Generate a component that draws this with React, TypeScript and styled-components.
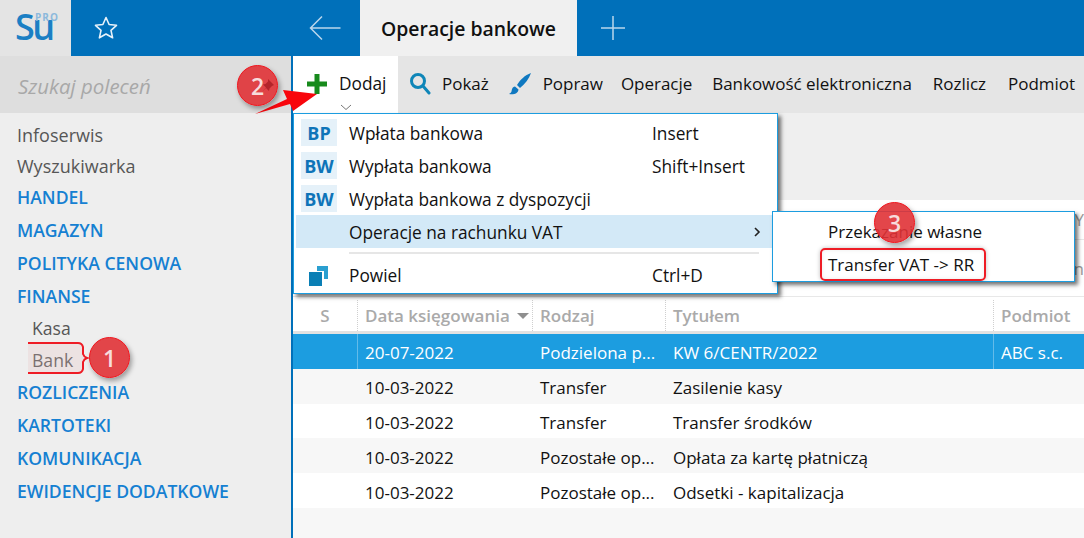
import React from "react";
import styled, { createGlobalStyle } from "styled-components";

const Global = createGlobalStyle`
  html, body { margin: 0; padding: 0; }
  body { width: 1084px; height: 538px; overflow: hidden; font-family: "Open Sans", "Noto Sans", sans-serif; }
`;

const Page = styled.div`
  position: relative;
  width: 1084px;
  height: 538px;
  overflow: hidden;
  background: #fff;
  display: flex;
  flex-direction: column;
`;

const TopBar = styled.div`
  height: 56px;
  display: flex;
  background: #0070ba;
  flex: none;
`;

const LogoBox = styled.div`
  width: 71px;
  background: #e4e4e4;
  position: relative;
`;

const LogoText = styled.span`
  position: absolute;
  left: 15px;
  top: 3px;
  font-size: 36px;
  line-height: 48px;
  font-weight: 600;
  letter-spacing: -2.5px;
  color: #1b7fc4;
`;

const LogoPro = styled.span`
  position: absolute;
  left: 35px;
  top: 11px;
  font-size: 10px;
  line-height: 12px;
  font-weight: 700;
  letter-spacing: 1px;
  color: #8cb9dc;
`;

const StarSlot = styled.div`
  width: 70px;
  display: flex;
  align-items: center;
  justify-content: center;
`;

const BackSlot = styled.div`
  margin-left: 149px;
  width: 70px;
  display: flex;
  align-items: center;
  justify-content: center;
`;

const Tab = styled.div`
  width: 217px;
  background: #f0f0f0;
  color: #111;
  font-size: 19.4px;
  font-weight: 600;
  display: flex;
  align-items: center;
  justify-content: center;
`;

const PlusSlot = styled.div`
  width: 72px;
  display: flex;
  align-items: center;
  justify-content: center;
`;

const Body = styled.div`
  flex: 1;
  display: flex;
  min-height: 0;
`;

const Sidebar = styled.aside`
  width: 291px;
  flex: none;
  background: #eeeeee;
  border-right: 2px solid #0070ba;
`;

const SearchBox = styled.div`
  height: 57px;
  background: #dedede;
  padding-left: 18px;
  padding-top: 2px;
  box-sizing: border-box;
  display: flex;
  align-items: center;
  font-style: italic;
  font-size: 20.4px;
  color: #a8a8a8;
`;

const NavList = styled.nav`
  padding-top: 7px;
  display: flex;
  flex-direction: column;
`;

const navHeight = { plain: 30.5, head: 33, sub: 31.5 };
const navSize = { plain: 18, head: 17.6, sub: 17.6 };

const NavItem = styled.div<{ $kind: "plain" | "head" | "sub" }>`
  height: ${(p) => navHeight[p.$kind]}px;
  line-height: ${(p) => navHeight[p.$kind]}px;
  padding-left: ${(p) => (p.$kind === "sub" ? 32 : 17)}px;
  font-size: ${(p) => navSize[p.$kind]}px;
  font-weight: ${(p) => (p.$kind === "head" ? 600 : 400)};
  color: ${(p) => (p.$kind === "head" ? "#1580d2" : "#565656")};
  white-space: nowrap;
`;

const Main = styled.main`
  flex: 1;
  min-width: 0;
  display: flex;
  flex-direction: column;
`;

const Toolbar = styled.div`
  height: 57px;
  padding-bottom: 2px;
  box-sizing: border-box;
  background: #e5e5e5;
  display: flex;
  align-items: center;
  flex: none;
`;

const AddButton = styled.div`
  position: relative;
  width: 105px;
  height: 57px;
  margin-bottom: -2px;
  padding-bottom: 2px;
  background: #fff;
  display: flex;
  align-items: center;
  padding-left: 14px;
  box-sizing: border-box;
  gap: 12px;
  font-size: 17.3px;
  color: #111;
`;

const Caret = styled.svg`
  position: absolute;
  left: 47px;
  bottom: 2px;
`;

const ToolItem = styled.div<{ $ml: number }>`
  margin-left: ${(p) => p.$ml}px;
  display: flex;
  align-items: center;
  gap: 11px;
  font-size: 17px;
  letter-spacing: -0.03px;
  color: #111;
  white-space: nowrap;
`;

const Filters = styled.div`
  height: 184px;
  flex: none;
  background: #fff;
  display: flex;
  flex-direction: column;
`;

const FilterTop = styled.div`
  height: 87px;
  flex: none;
  background: #efefef;
`;

const FilterRow = styled.div<{ $h: number }>`
  height: ${(p) => p.$h}px;
  flex: none;
  box-sizing: border-box;
  border-bottom: 1px solid #e8e8e8;
  display: flex;
  align-items: center;
  justify-content: flex-end;
  font-size: 17px;
  color: #9a9a9a;
`;

const Table = styled.div`
  flex: 1;
  background: #f7f7f7;
`;

const grid = "65px 175px 133px 328px 1fr";

const HeadRow = styled.div`
  display: grid;
  grid-template-columns: ${grid};
  height: 37px;
  padding-top: 3px;
  background: #fff;
  border-bottom: 3px solid #e2e2e2;
  box-sizing: border-box;
`;

const HeadCell = styled.div<{ $center?: boolean }>`
  display: flex;
  align-items: center;
  gap: 7px;
  justify-content: ${(p) => (p.$center ? "center" : "flex-start")};
  padding-left: ${(p) => (p.$center ? 0 : 7)}px;
  font-size: 17px;
  font-weight: 600;
  color: #aaaaaa;
  border-right: 1px dotted #cfcfcf;
  white-space: nowrap;
  &:last-child { border-right: 0; }
`;

const SortArrow = styled.span`
  width: 0;
  height: 0;
  border-left: 6px solid transparent;
  border-right: 6px solid transparent;
  border-top: 6px solid #8f8f8f;
`;

const Row = styled.div<{ $selected?: boolean; $alt?: boolean }>`
  display: grid;
  grid-template-columns: ${grid};
  height: 34.8px;
  background: ${(p) => (p.$selected ? "#1c9de0" : p.$alt ? "#f7f7f7" : "#fff")};
  color: ${(p) => (p.$selected ? "#fff" : "#111")};
  font-size: 17px;
`;

const Cell = styled.div<{ $divider?: boolean }>`
  display: flex;
  align-items: center;
  padding: 3px 0 0 7px;
  box-sizing: border-box;
  white-space: nowrap;
  overflow: hidden;
  border-right: 1px solid ${(p) => (p.$divider ? "#63bbe9" : "transparent")};
  &:last-child { border-right: 0; }
`;

const Menu = styled.div`
  position: absolute;
  left: 293px;
  top: 113px;
  width: 485px;
  height: 181px;
  box-sizing: border-box;
  background: #fff;
  border: 1px solid #1c9de0;
  padding: 2px 2px 0;
  box-shadow: 3px 3px 4px rgba(0, 0, 0, 0.55);
`;

const MenuRow = styled.div<{ $hover?: boolean }>`
  position: relative;
  height: 33px;
  padding-top: 2px;
  box-sizing: border-box;
  display: grid;
  grid-template-columns: 53px 303px 1fr;
  align-items: center;
  font-size: 17.3px;
  color: #111;
  background: ${(p) => (p.$hover ? "#d3e9f7" : "transparent")};
  white-space: nowrap;
`;

const Badge = styled.span`
  justify-self: start;
  margin: -2px 0 0 5px;
  width: 36px;
  height: 27px;
  background: #e5f1f9;
  color: #0e74b8;
  font-size: 18px;
  font-weight: 700;
  display: flex;
  align-items: center;
  justify-content: center;
`;

const Separator = styled.div`
  height: 2px;
  margin: 4px 16px 4px 53px;
  background: #e6e6e6;
`;

const Chevron = styled.svg`
  position: absolute;
  right: 14px;
  top: 12px;
`;

const CopyIcon = styled.svg`
  margin-left: 13px;
`;

const Submenu = styled.div`
  position: absolute;
  left: 772px;
  top: 211px;
  width: 303px;
  height: 71px;
  box-sizing: border-box;
  padding-top: 3px;
  background: #fff;
  border: 1px solid #1c9de0;
  box-shadow: 3px 3px 4px rgba(0, 0, 0, 0.55);
`;

const SubmenuRow = styled.div`
  height: 33px;
  padding-left: 55px;
  display: flex;
  align-items: center;
  font-size: 17px;
  color: #111;
`;

const Callout = styled.div`
  position: absolute;
  left: 820px;
  top: 248px;
  width: 166px;
  height: 33px;
  box-sizing: border-box;
  border: 2px solid #ee1c25;
  border-radius: 5px;
  box-shadow: 0 0 4px rgba(0, 0, 0, 0.25), inset 0 0 4px rgba(0, 0, 0, 0.08);
`;

const Marker = styled.div<{ $x: number; $y: number }>`
  position: absolute;
  left: ${(p) => p.$x}px;
  top: ${(p) => p.$y}px;
  width: 41px;
  height: 41px;
  box-sizing: border-box;
  border-radius: 50%;
  background: rgba(224, 50, 54, 0.9);
  border: 1.5px solid #f0161e;
  box-shadow: 2px 3px 5px rgba(0, 0, 0, 0.35);
  color: #f7dcdc;
  font-size: 23px;
  font-weight: 600;
  display: flex;
  align-items: center;
  justify-content: center;
`;

const Overlay = styled.svg<{ $x: number; $y: number }>`
  position: absolute;
  left: ${(p) => p.$x}px;
  top: ${(p) => p.$y}px;
  pointer-events: none;
  overflow: visible;
`;

const rows = [
  ["20-07-2022", "Podzielona p...", "KW 6/CENTR/2022", "ABC s.c."],
  ["10-03-2022", "Transfer", "Zasilenie kasy", ""],
  ["10-03-2022", "Transfer", "Transfer środków", ""],
  ["10-03-2022", "Pozostałe op...", "Opłata za kartę płatniczą", ""],
  ["10-03-2022", "Pozostałe op...", "Odsetki - kapitalizacja", ""],
];

export default function App() {
  return (
    <Page>
      <Global />
      <TopBar>
        <LogoBox>
          <LogoText>Su</LogoText>
          <LogoPro>PRO</LogoPro>
        </LogoBox>
        <StarSlot>
          <svg width="28" height="28" viewBox="0 0 28 28" fill="none" stroke="#e8f2fa" strokeWidth="1.6" strokeLinejoin="round">
            <path d="M14 3.500l3.100 7 7.400.8-5.500 5 1.600 7.500L14 20l-6.600 3.800L9 16.300l-5.500-5 7.400-.8z" />
          </svg>
        </StarSlot>
        <BackSlot>
          <svg width="32" height="26" viewBox="0 0 32 26" fill="none" stroke="#b9d6ec" strokeWidth="1.5">
            <path d="M31.500 13H1.500M13 1.500L1.500 13 13 24.500" />
          </svg>
        </BackSlot>
        <Tab>Operacje bankowe</Tab>
        <PlusSlot>
          <svg width="26" height="26" viewBox="0 0 26 26" stroke="#b9d6ec" strokeWidth="1.5">
            <path d="M13 1v24M1 13h24" />
          </svg>
        </PlusSlot>
      </TopBar>
      <Body>
        <Sidebar>
          <SearchBox>Szukaj poleceń</SearchBox>
          <NavList>
            <NavItem $kind="plain">Infoserwis</NavItem>
            <NavItem $kind="plain">Wyszukiwarka</NavItem>
            <NavItem $kind="head">HANDEL</NavItem>
            <NavItem $kind="head">MAGAZYN</NavItem>
            <NavItem $kind="head">POLITYKA CENOWA</NavItem>
            <NavItem $kind="head">FINANSE</NavItem>
            <NavItem $kind="sub">Kasa</NavItem>
            <NavItem $kind="sub">Bank</NavItem>
            <NavItem $kind="head">ROZLICZENIA</NavItem>
            <NavItem $kind="head">KARTOTEKI</NavItem>
            <NavItem $kind="head">KOMUNIKACJA</NavItem>
            <NavItem $kind="head">EWIDENCJE DODATKOWE</NavItem>
          </NavList>
        </Sidebar>
        <Main>
          <Toolbar>
            <AddButton>
              <svg width="20" height="20" viewBox="0 0 20 20" fill="#178a1c">
                <path d="M7.500 0h5v7.500H20v5h-7.500V20h-5v-7.500H0v-5h7.500z" />
              </svg>
              Dodaj
              <Caret width="12" height="7" viewBox="0 0 12 7" fill="none" stroke="#777" strokeWidth="1">
                <path d="M1 1l5 4.500L11 1" />
              </Caret>
            </AddButton>
            <ToolItem $ml={11}>
              <svg width="22" height="23" viewBox="0 0 22 23" fill="none" stroke="#0f86b8" strokeWidth="3">
                <circle cx="9" cy="9" r="6.500" />
                <path d="M14 14l6 7" strokeLinecap="round" />
              </svg>
              Pokaż
            </ToolItem>
            <ToolItem $ml={19}>
              <svg width="24" height="24" viewBox="0 0 24 24" fill="#0f78c0">
                <path d="M23 1c-6 2-11 7-14 12l3 3C17 12 21 7 23 1zM7 14.500c-3 .5-3 3-3.500 5-.3 1.200-1.500 2-2.500 2.500 4 1 9 0 9.500-4.500z" />
              </svg>
              Popraw
            </ToolItem>
            <ToolItem $ml={18}>Operacje</ToolItem>
            <ToolItem $ml={20}>Bankowość elektroniczna</ToolItem>
            <ToolItem $ml={21}>Rozlicz</ToolItem>
            <ToolItem $ml={22}>Podmiot</ToolItem>
          </Toolbar>
          <Filters>
            <FilterTop />
            <FilterRow $h={40}>Y</FilterRow>
            <FilterRow $h={57}>n</FilterRow>
          </Filters>
          <Table>
            <HeadRow>
              <HeadCell $center>S</HeadCell>
              <HeadCell>
                Data księgowania
                <SortArrow />
              </HeadCell>
              <HeadCell>Rodzaj</HeadCell>
              <HeadCell>Tytułem</HeadCell>
              <HeadCell>Podmiot</HeadCell>
            </HeadRow>
            {rows.map((r, i) => (
              <Row key={i} $selected={i === 0} $alt={i % 2 === 1}>
                <Cell $divider={i === 0} />
                {r.map((c, j) => (
                  <Cell key={j} $divider={i === 0 && j === 2}>
                    {c}
                  </Cell>
                ))}
              </Row>
            ))}
          </Table>
        </Main>
      </Body>

      <Menu>
        <MenuRow>
          <Badge>BP</Badge>
          <span>Wpłata bankowa</span>
          <span>Insert</span>
        </MenuRow>
        <MenuRow>
          <Badge>BW</Badge>
          <span>Wypłata bankowa</span>
          <span>Shift+Insert</span>
        </MenuRow>
        <MenuRow>
          <Badge>BW</Badge>
          <span>Wypłata bankowa z dyspozycji</span>
        </MenuRow>
        <MenuRow $hover>
          <span />
          <span>Operacje na rachunku VAT</span>
          <Chevron width="8" height="10" viewBox="0 0 8 10" fill="none" stroke="#222" strokeWidth="1.6">
            <path d="M2 1l4 4-4 4" />
          </Chevron>
        </MenuRow>
        <Separator />
        <MenuRow>
          <CopyIcon width="20" height="20" viewBox="0 0 20 20">
            <path d="M8 0h11v13h-4V5H8z" fill="#2a9fd0" />
            <path d="M0 6h13v14H0z" fill="#0a7fb5" />
          </CopyIcon>
          <span>Powiel</span>
          <span>Ctrl+D</span>
        </MenuRow>
      </Menu>

      <Submenu>
        <SubmenuRow>Przekazanie własne</SubmenuRow>
        <SubmenuRow>Transfer VAT -&gt; RR</SubmenuRow>
      </Submenu>
      <Callout />

      <Overlay $x={26} $y={341} width="64" height="34" viewBox="0 0 64 34" fill="rgba(230,190,190,0.25)" stroke="#ee1c25" strokeWidth="2">
        <path d="M2 2h50q4 0 5 4v7q1 3 4 4-3 1-4 4v7q-1 4-5 4H2" />
      </Overlay>
      <Overlay $x={250} $y={75} width="70" height="42" viewBox="0 0 70 42">
        <path d="M5 39l32-15-4-9 34 4-24 17-3-7z" fill="#f8060d" />
      </Overlay>

      <Marker $x={89} $y={337}>1</Marker>
      <Marker $x={237} $y={65}>2</Marker>
      <Marker $x={874} $y={202}>3</Marker>
      <Overlay $x={261} $y={79} width="13" height="13" viewBox="0 0 13 13">
        <path d="M7 0l6 6-2 1-2.500 2.500-.5 2.500-3-3-4 4 4-4.500-3-3 2.500-.5L7 2.500z" fill="#b3242a" />
      </Overlay>
    </Page>
  );
}
